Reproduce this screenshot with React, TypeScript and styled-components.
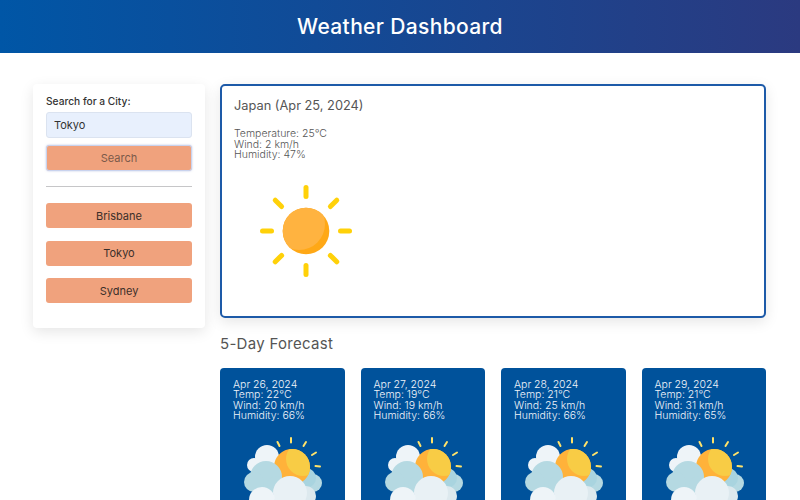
import styled, { createGlobalStyle } from "styled-components";

const GlobalStyle = createGlobalStyle`
    html, body {
        margin: 0;
        height: 100%;
        overflow: hidden;
        background: #fff;
        font-family: "Inter", "Noto Sans", sans-serif;
    }
    * {
        box-sizing: border-box;
    }
`;

const cities = ["Brisbane", "Tokyo", "Sydney"];

const forecast = [
    { date: "Apr 26, 2024", temp: "22°C", wind: "20 km/h", humidity: "66%" },
    { date: "Apr 27, 2024", temp: "19°C", wind: "19 km/h", humidity: "66%" },
    { date: "Apr 28, 2024", temp: "21°C", wind: "25 km/h", humidity: "66%" },
    { date: "Apr 29, 2024", temp: "21°C", wind: "31 km/h", humidity: "65%" },
];

function SunIcon() {
    const rays = [0, 45, 90, 135, 180, 225, 270, 315];
    return (
        <svg width="100" height="100" viewBox="0 0 100 100">
            <defs>
                <clipPath id="sun-disc">
                    <circle cx="50" cy="50" r="23.300" />
                </clipPath>
            </defs>
            {rays.map((angle) => (
                <line
                    key={angle}
                    x1="50"
                    y1="6.500"
                    x2="50"
                    y2="15.500"
                    stroke="#ffd109"
                    strokeWidth="5"
                    strokeLinecap="round"
                    transform={`rotate(${angle} 50 50)`}
                />
            ))}
            <circle cx="50" cy="50" r="23.300" fill="#ffa816" />
            <circle cx="43" cy="43" r="26" fill="#ffb340" clipPath="url(#sun-disc)" />
        </svg>
    );
}

function CloudSunIcon({ id }: { id: string }) {
    return (
        <svg width="90" height="90" viewBox="0 0 90 90">
            <defs>
                <clipPath id={id}>
                    <circle cx="52" cy="37" r="18" />
                </clipPath>
            </defs>
            <g stroke="#ffe26a" strokeWidth="2" strokeLinecap="round">
                <line x1="37.500" y1="12" x2="39.500" y2="16" />
                <line x1="51" y1="8" x2="51" y2="12.500" />
                <line x1="66" y1="12" x2="63.500" y2="16" />
                <line x1="76" y1="22.500" x2="72" y2="25" />
                <line x1="80" y1="36.500" x2="75.500" y2="36" />
            </g>
            <circle cx="73" cy="53" r="9" fill="#b5d9e2" />
            <circle cx="66" cy="48" r="10" fill="#a9d4df" />
            <circle cx="27" cy="27" r="12" fill="#eef4f8" />
            <circle cx="14" cy="35" r="7" fill="#eef4f8" />
            <circle cx="52" cy="37" r="18" fill="#ffb23a" />
            <circle cx="63" cy="29" r="17" fill="#f8cc45" clipPath={`url(#${id})`} />
            <circle cx="26" cy="47" r="16" fill="#b5d9e2" />
            <circle cx="14" cy="52" r="10" fill="#b5d9e2" />
            <circle cx="36" cy="55" r="9" fill="#b5d9e2" />
            <circle cx="66" cy="66" r="10" fill="#dde9ee" />
            <circle cx="50" cy="63" r="17" fill="#e9f1f5" />
            <circle cx="22" cy="70" r="13" fill="#eef4f8" />
        </svg>
    );
}

function App() {
    return (
        <>
            <GlobalStyle />
            <Header>Weather Dashboard</Header>
            <Page>
                <Sidebar>
                    <SearchLabel>Search for a City:</SearchLabel>
                    <SearchInput defaultValue="Tokyo" />
                    <SearchButton>Search</SearchButton>
                    <Divider />
                    <CityList>
                        {cities.map((city) => (
                            <CityButton key={city}>{city}</CityButton>
                        ))}
                    </CityList>
                </Sidebar>
                <Main>
                    <CurrentCard>
                        <CurrentTitle>Japan (Apr 25, 2024)</CurrentTitle>
                        <CurrentStats>
                            <div>Temperature: 25°C</div>
                            <div>Wind: 2 km/h</div>
                            <div>Humidity: 47%</div>
                        </CurrentStats>
                        <CurrentIcon>
                            <SunIcon />
                        </CurrentIcon>
                    </CurrentCard>
                    <ForecastTitle>5-Day Forecast</ForecastTitle>
                    <ForecastRow>
                        {forecast.map((day) => (
                            <ForecastCard key={day.date}>
                                <ForecastStats>
                                    <div>{day.date}</div>
                                    <div>Temp: {day.temp}</div>
                                    <div>Wind: {day.wind}</div>
                                    <div>Humidity: {day.humidity}</div>
                                </ForecastStats>
                                <ForecastIcon>
                                    <CloudSunIcon id={`sun-${day.date.slice(4, 6)}`} />
                                </ForecastIcon>
                            </ForecastCard>
                        ))}
                    </ForecastRow>
                </Main>
            </Page>
        </>
    );
}

// Styling
const Header = styled.header`
    height: 53px;
    display: flex;
    align-items: center;
    justify-content: center;
    background: linear-gradient(90deg, #0056a6, #2b3a80);
    color: #fff;
    font-size: 21px;
    font-weight: 500;
    letter-spacing: 0.35px;
    padding-bottom: 1px;
`;

const Page = styled.div`
    display: flex;
    align-items: flex-start;
    gap: 15px;
    padding: 31px 34px 0 33px;
`;

const Sidebar = styled.aside`
    width: 172px;
    flex-shrink: 0;
    height: 244px;
    padding: 12px 13px 0;
    background: #fff;
    border-radius: 4px;
    box-shadow: 0 4px 14px rgba(0, 0, 0, 0.1);
`;

const SearchLabel = styled.label`
    display: block;
    color: #333;
    font-size: 10.200px;
    font-weight: 500;
    line-height: 11px;
    margin-bottom: 5px;
`;

const SearchInput = styled.input`
    display: block;
    width: 100%;
    height: 26px;
    padding: 0 7px;
    color: #333;
    font-family: inherit;
    font-size: 11px;
    background: #e8f0fd;
    border: 1px solid #dbe3f0;
    border-radius: 3px;
    outline: none;
`;

const SearchButton = styled.button`
    display: block;
    width: 100%;
    height: 26px;
    margin-top: 7px;
    color: #7b5a4a;
    font-family: inherit;
    font-size: 11px;
    background: #f0a27d;
    border: 1px solid #c9d3ee;
    border-radius: 3px;
    box-shadow: 0 0 2px rgba(110, 130, 200, 0.5);
`;

const Divider = styled.hr`
    margin: 15px 0 16px;
    border: 0;
    border-top: 1px solid #c6c6c8;
`;

const CityList = styled.div`
    display: flex;
    flex-direction: column;
    gap: 12.500px;
`;

const CityButton = styled.button`
    height: 25px;
    padding: 0;
    color: #3b2f2a;
    font-family: inherit;
    font-size: 11px;
    background: #f0a27d;
    border: 0;
    border-radius: 3px;
`;

const Main = styled.main`
    flex: 1;
    min-width: 0;
`;

const CurrentCard = styled.section`
    height: 234px;
    padding: 12px 12px 0;
    border: 2px solid #1d5aa8;
    border-radius: 5px;
    box-shadow: 0 4px 14px rgba(0, 0, 0, 0.1);
`;

const CurrentTitle = styled.h2`
    margin: 0;
    color: #555;
    font-size: 12.800px;
    font-weight: 400;
    line-height: 16px;
`;

const CurrentStats = styled.div`
    margin-top: 15px;
    color: #555;
    font-size: 10.500px;
    font-weight: 300;
    line-height: 10.500px;
`;

const CurrentIcon = styled.div`
    margin: 20px 0 0 22px;
    line-height: 0;
`;

const ForecastTitle = styled.h3`
    margin: 17px 0 15px;
    color: #555;
    font-size: 15px;
    font-weight: 400;
    line-height: 18px;
    letter-spacing: 0.3px;
`;

const ForecastRow = styled.div`
    display: grid;
    grid-template-columns: repeat(4, 1fr);
    column-gap: 16px;
`;

const ForecastCard = styled.article`
    height: 160px;
    padding: 12px 13px 0;
    color: #f0f4fa;
    background: #00529b;
    border-radius: 4px;
`;

const ForecastStats = styled.div`
    font-size: 10.500px;
    font-weight: 300;
    line-height: 10.300px;
`;

const ForecastIcon = styled.div`
    margin: 9px 0 0 7px;
    line-height: 0;
`;

export default App;
